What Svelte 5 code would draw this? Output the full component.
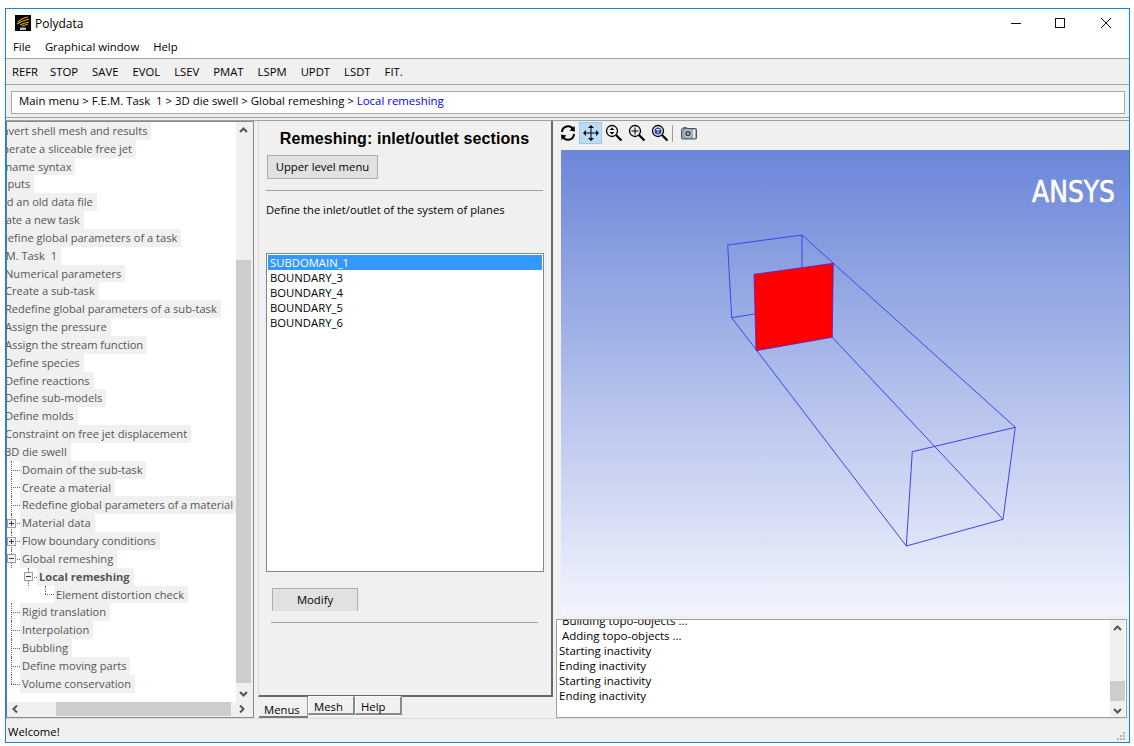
<script>
	const menus = ['File', 'Graphical window', 'Help'];
	const tools = ['REFR', 'STOP', 'SAVE', 'EVOL', 'LSEV', 'PMAT', 'LSPM', 'UPDT', 'LSDT', 'FIT.'];

	// depth, label, kind of twig in front of the label
	const tree = [
		[1, 'Convert shell mesh and results'],
		[1, 'Generate a sliceable free jet'],
		[1, 'Filename syntax'],
		[1, 'Outputs'],
		[1, 'Load an old data file'],
		[1, 'Create a new task'],
		[1, 'Redefine global parameters of a task'],
		[1, 'F.E.M. Task  1'],
		[2, 'Numerical parameters'],
		[2, 'Create a sub-task'],
		[2, 'Redefine global parameters of a sub-task'],
		[2, 'Assign the pressure'],
		[2, 'Assign the stream function'],
		[2, 'Define species'],
		[2, 'Define reactions'],
		[2, 'Define sub-models'],
		[2, 'Define molds'],
		[2, 'Constraint on free jet displacement'],
		[2, '3D die swell'],
		[3, 'Domain of the sub-task', 'leaf'],
		[3, 'Create a material', 'leaf'],
		[3, 'Redefine global parameters of a material', 'leaf'],
		[3, 'Material data', 'plus'],
		[3, 'Flow boundary conditions', 'plus'],
		[3, 'Global remeshing', 'minus'],
		[4, 'Local remeshing', 'minus'],
		[5, 'Element distortion check', 'end'],
		[3, 'Rigid translation', 'leaf'],
		[3, 'Interpolation', 'leaf'],
		[3, 'Bubbling', 'leaf'],
		[3, 'Define moving parts', 'leaf'],
		[3, 'Volume conservation', 'end']
	];

	const boundaries = ['SUBDOMAIN_1', 'BOUNDARY_3', 'BOUNDARY_4', 'BOUNDARY_5', 'BOUNDARY_6'];
	const log = [' Building topo-objects ...', ' Adding topo-objects ...', 'Starting inactivity', 'Ending inactivity', 'Starting inactivity', 'Ending inactivity'];
</script>

<div class="window">
	<header class="titlebar">
		<svg class="logo" viewBox="0 0 16 16" width="16" height="16">
			<rect width="16" height="16" fill="#000" />
			<path d="M3 7 Q7 3 13 2 M2 9 Q7 6 14 4 M5 10 Q9 8 14 7 M7 11 Q11 10 13 9" stroke="#e0a020" stroke-width="1.2" fill="none" />
			<rect x="5" y="12.5" width="6" height="2.5" fill="#bbb" />
		</svg>
		<span class="title">Polydata</span>
		<div class="caption">
			<svg width="44" height="12" viewBox="0 0 44 12"><path d="M1 6.5h10" stroke="#111" /></svg>
			<svg width="46" height="12" viewBox="0 0 46 12"><rect x="1.5" y="1.5" width="9" height="9" fill="none" stroke="#111" /></svg>
			<svg width="12" height="12" viewBox="0 0 12 12"><path d="M1 1l10 10M11 1L1 11" stroke="#111" /></svg>
		</div>
	</header>

	<nav class="menubar">
		{#each menus as m}<span>{m}</span>{/each}
	</nav>

	<div class="toolbar">
		{#each tools as t}<span>{t}</span>{/each}
	</div>

	<div class="crumbs">
		<div class="crumb-box">Main menu &gt; F.E.M. Task  1 &gt; 3D die swell &gt; Global remeshing &gt; <span class="current">Local remeshing</span></div>
	</div>

	<main class="body">
		<section class="tree-frame">
			<div class="tree-top">
				<div class="tree">
					{#each tree as [depth, label, twig]}
						<div class="row" style="padding-left: {(depth - 1) * 17 + 2}px">
							<span class="twig {twig ?? ''}">
								{#if twig === 'plus' || twig === 'minus'}
									<i class="box">{#if twig === 'plus'}<b></b>{/if}</i>
								{/if}
							</span>
							<span class="label" class:bold={depth === 4}>{label}</span>
						</div>
					{/each}
				</div>
				<div class="vscroll">
					<svg class="arrow" width="15" height="16" viewBox="0 0 15 16"><path d="M4 10l3.5-3.5L11 10" stroke="#555" stroke-width="2" fill="none" /></svg>
					<div class="vtrack"><div class="vthumb"></div></div>
					<svg class="arrow" width="15" height="16" viewBox="0 0 15 16"><path d="M4 6l3.5 3.5L11 6" stroke="#555" stroke-width="2" fill="none" /></svg>
				</div>
			</div>
			<div class="hscroll">
				<svg width="16" height="14" viewBox="0 0 16 14"><path d="M10 3.5L6.5 7l3.5 3.5" stroke="#555" stroke-width="2" fill="none" /></svg>
				<div class="htrack"><div class="hthumb"></div></div>
				<svg width="16" height="14" viewBox="0 0 16 14"><path d="M6 3.5L9.5 7 6 10.5" stroke="#555" stroke-width="2" fill="none" /></svg>
			</div>
		</section>

		<section class="middle">
			<div class="panel">
				<h1>Remeshing: inlet/outlet sections</h1>
				<button class="upper">Upper level menu</button>
				<hr class="rule-a" />
				<p>Define the inlet/outlet of the system of planes</p>
				<div class="listbox">
					{#each boundaries as b, i}
						<div class="item" class:selected={i === 0}>{b}</div>
					{/each}
				</div>
				<button class="modify">Modify</button>
				<hr class="rule-b" />
			</div>
			<div class="tabs">
				<span class="tab active">Menus</span>
				<span class="tab">Mesh</span>
				<span class="tab">Help</span>
			</div>
		</section>

		<section class="right">
			<div class="viewbar">
				<button class="ico" aria-label="Rotate">
					<svg width="18" height="18" viewBox="0 0 18 18"><path d="M3 8A6 6 0 0 1 14 5M15 10A6 6 0 0 1 4 13" fill="none" stroke="#000" stroke-width="2" /><path d="M10.500 6.500L16 7.500 15.500 2zM7.500 11.500L2 10.500 2.500 16z" fill="#000" /></svg>
				</button>
				<button class="ico on" aria-label="Pan">
					<svg width="18" height="18" viewBox="0 0 18 18"><path d="M9 3v12M3 9h12" stroke="#000" /><path d="M9 1l3 3H6zM9 17l-3-3h6zM1 9l3-3v6zM17 9l-3 3V6z" fill="#000" /></svg>
				</button>
				<button class="ico" aria-label="Zoom window">
					<svg width="18" height="18" viewBox="0 0 18 18"><circle cx="7" cy="7" r="5.500" fill="none" stroke="#000" stroke-width="1.300" /><path d="M11 11l5.500 5.500" stroke="#000" stroke-width="2.200" /><path d="M7 3.500L9.500 6h-5zM7 10.500L4.500 8h5z" fill="#000" /></svg>
				</button>
				<button class="ico" aria-label="Zoom in">
					<svg width="18" height="18" viewBox="0 0 18 18"><circle cx="7" cy="7" r="5.500" fill="none" stroke="#000" stroke-width="1.300" /><path d="M11 11l5.500 5.500" stroke="#000" stroke-width="2.200" /><path d="M7 3.500v7M3.500 7h7" stroke="#000" /></svg>
				</button>
				<button class="ico" aria-label="Zoom fit">
					<svg width="18" height="18" viewBox="0 0 18 18"><circle cx="7" cy="7" r="5.500" fill="none" stroke="#000" stroke-width="1.300" /><path d="M11 11l5.500 5.500" stroke="#000" stroke-width="2.200" /><circle cx="7" cy="7" r="3.500" fill="#1d4fb0" /><path d="M5 5.500h4M7 5.500v4" stroke="#dde" /></svg>
				</button>
				<span class="sep"></span>
				<button class="ico" aria-label="Snapshot">
					<svg width="16" height="14" viewBox="0 0 16 14"><rect x="0.500" y="2.500" width="15" height="10.500" rx="1" fill="#9aa4ae" stroke="#555" /><rect x="2" y="1" width="4" height="2" fill="#667" /><circle cx="7" cy="7.500" r="3.500" fill="#3d4a58" stroke="#dde" /><circle cx="7" cy="7.500" r="1.500" fill="#8ab" /><rect x="12" y="4" width="2" height="8" fill="#eef" /></svg>
				</button>
			</div>

			<div class="viewport">
				<svg width="568" height="465" viewBox="561 150 568 465">
					<g fill="none" stroke="#3a46ee" stroke-width="1">
						<path d="M727.700 245L802 235L801.900 267M727.700 245L731.700 317.700L754.500 314" />
						<path d="M802 235L1015.300 427.300L1003 519.300L906.300 546L912.300 451.700L1015.300 427.300" />
						<path d="M731.700 317.700L906.300 546M832.300 337.300L1003 519.300" />
					</g>
					<path d="M754 274.300L833.300 263.300L832.300 337.300L756 350.700z" fill="#ff0000" stroke="#3a1ff0" stroke-width="0.700" />
					<text x="1032" y="202" class="brand" textLength="83" lengthAdjust="spacingAndGlyphs">ANSYS</text>
				</svg>
			</div>

			<div class="log">
				<div class="log-lines">
					{#each log as line}<div>{line}</div>{/each}
				</div>
				<div class="log-scroll">
					<svg class="arrow" width="15" height="16" viewBox="0 0 15 16"><path d="M4 10l3.500-3.500L11 10" stroke="#555" stroke-width="2" fill="none" /></svg>
					<div class="log-track"><div class="log-thumb"></div></div>
					<svg class="arrow" width="15" height="16" viewBox="0 0 15 16"><path d="M4 6l3.500 3.500L11 6" stroke="#555" stroke-width="2" fill="none" /></svg>
				</div>
			</div>
		</section>
	</main>

	<footer class="status">
		<span>Welcome!</span>
		<svg width="10" height="10" viewBox="0 0 10 10" class="grip"><path d="M7 1h2v2H7zM4 4h2v2H4zM7 4h2v2H7zM1 7h2v2H1zM4 7h2v2H4zM7 7h2v2H7z" fill="#b5b5b5" /></svg>
	</footer>
</div>

<style>
	:global(body) {
		margin: 0;
		background: #fff;
	}

	.window {
		box-sizing: border-box;
		margin: 8px 0 0 5px;
		width: 1125px;
		height: 735px;
		border: 1px solid #1883d7;
		background: #f0f0f0;
		display: flex;
		flex-direction: column;
		font: 11.3px "Open Sans", "Noto Sans", sans-serif;
		color: #000;
		overflow: hidden;
	}

	.titlebar {
		height: 28px;
		flex: none;
		background: #fff;
		display: flex;
		align-items: center;
		padding-left: 9px;
	}

	.title {
		margin-left: 4px;
		font-size: 12px;
	}

	.caption {
		margin-left: auto;
		margin-right: 17px;
		display: flex;
		align-items: center;
	}

	.menubar {
		box-sizing: content-box;
		height: 19px;
		padding: 0 0 2px 7px;
		flex: none;
		background: #fff;
		display: flex;
		gap: 14px;
		align-items: center;
		border-bottom: 1px solid #a0a0a0;
	}

	.toolbar {
		height: 25px;
		flex: none;
		display: flex;
		gap: 14px;
		padding-left: 6px;
		align-items: center;
		border-bottom: 1px solid #a0a0a0;
	}

	.toolbar span:first-child {
		margin-right: -2px;
	}

	.crumbs {
		height: 33px;
		flex: none;
		box-sizing: border-box;
		padding: 6px 4px 0 5px;
		border-bottom: 1px solid #a0a0a0;
	}

	.crumb-box {
		box-sizing: border-box;
		height: 23px;
		background: #fff;
		border: 1px solid #a8a8a8;
		padding-left: 7px;
		font-size: 11.4px;
		line-height: 18px;
		white-space: pre;
	}

	.current {
		color: #0000ee;
	}

	.body {
		flex: 1;
		min-height: 0;
		display: flex;
		border-top: 1px solid #a0a0a0;
		margin-top: 2px;
		border-bottom: 1px solid #dcdcdc;
	}

	/* left tree */
	.tree-frame {
		box-sizing: border-box;
		width: 248px;
		flex: none;
		background: #f0f0f0;
		border: 1px solid #8a8a8a;
		border-left: 1px solid #4f7fa8;
		display: flex;
		flex-direction: column;
	}

	.tree-top {
		flex: 1;
		min-height: 0;
		display: flex;
	}

	.tree {
		flex: 1;
		min-width: 0;
		background: #fff;
		overflow: hidden;
	}

	.row {
		display: flex;
		height: 17.84px;
		margin-left: -40px;
		white-space: pre;
		font-size: 11.1px;
		line-height: 17px;
		color: #555;
	}

	.label {
		padding: 0 4px 0 2px;
		background: #f0f0f0;
	}

	.bold {
		font-weight: 700;
	}

	.twig {
		position: relative;
		width: 17px;
		flex: none;
	}

	.leaf::before,
	.plus::before,
	.minus::before,
	.end::before {
		content: '';
		position: absolute;
		left: 8px;
		top: 0;
		bottom: 0;
		border-left: 1px dotted #666;
	}

	.end::before {
		bottom: 50%;
	}

	.leaf::after,
	.plus::after,
	.minus::after,
	.end::after {
		content: '';
		position: absolute;
		left: 8px;
		right: 0;
		top: 50%;
		border-top: 1px dotted #666;
	}

	.box {
		position: absolute;
		z-index: 1;
		left: 4px;
		top: 4.500px;
		box-sizing: border-box;
		width: 9px;
		height: 9px;
		border: 1px solid #a0a0a0;
		background: #f4f4f4;
	}

	.box::before {
		content: '';
		position: absolute;
		left: 1px;
		right: 1px;
		top: 3px;
		height: 1px;
		background: #2a3a6a;
	}

	.box b {
		position: absolute;
		top: 1px;
		bottom: 1px;
		left: 3px;
		width: 1px;
		background: #2a3a6a;
	}

	.vscroll,
	.log-scroll {
		width: 15px;
		flex: none;
		margin-right: 2px;
		display: flex;
		flex-direction: column;
		background: #f0f0f0;
	}

	.arrow {
		flex: none;
	}

	.vtrack {
		flex: 1;
		padding-top: 122px;
		padding-bottom: 3px;
		display: flex;
	}

	.vthumb {
		flex: 1;
		background: #cdcdcd;
	}

	.hscroll {
		height: 14px;
		flex: none;
		margin: 0 3px 1px 0;
		display: flex;
		background: #f0f0f0;
	}

	.htrack {
		flex: 1;
		padding-left: 33px;
		padding-right: 3px;
		display: flex;
	}

	.hthumb {
		flex: 1;
		background: #cdcdcd;
	}

	/* middle panel */
	.middle {
		box-sizing: border-box;
		width: 295px;
		margin-left: 4px;
		flex: none;
		display: flex;
		flex-direction: column;
	}

	.panel {
		box-sizing: border-box;
		height: 576px;
		border-right: 2px solid #6a6a6a;
		border-bottom: 2px solid #6a6a6a;
		border-left: 1px solid #d8d8d8;
		display: flex;
		flex-direction: column;
		padding: 0 8px 0 7px;
	}

	h1 {
		margin: 8px 0 0;
		font: 700 16px/19px "Liberation Sans", Arial, sans-serif;
		letter-spacing: 0.1px;
		text-align: center;
	}

	button {
		font: inherit;
		color: inherit;
		padding: 0;
	}

	.upper {
		width: 111px;
		height: 24px;
		margin: 7px 0 0 1px;
		padding-bottom: 2px;
		background: #e1e1e1;
		border: 1px solid #adadad;
	}

	hr {
		border: none;
		height: 1px;
		background: #a0a0a0;
		margin: 0;
	}

	.rule-a {
		margin-top: 11px;
	}

	p {
		margin: 11px 0 0;
		line-height: 16px;
		font-size: 11.2px;
	}

	.listbox {
		box-sizing: border-box;
		margin-top: 35px;
		height: 319px;
		width: 278px;
		background: #fff;
		border: 1px solid #828790;
		padding: 1px;
	}

	.item {
		height: 15px;
		line-height: 15px;
		padding-left: 2px;
	}

	.selected {
		background: #3399ff;
		color: #fff;
	}

	.modify {
		width: 86px;
		height: 23px;
		margin: 16px 0 0 6px;
		padding-bottom: 2px;
		background: #e1e1e1;
		border: 1px solid #adadad;
		border-bottom: none;
	}

	.rule-b {
		margin: 11px 5px 0 5px;
	}

	.tabs {
		display: flex;
		padding-left: 1px;
		align-items: flex-start;
	}

	.tab {
		box-sizing: border-box;
		height: 19px;
		padding: 0 0 0 5px;
		width: 47px;
		line-height: 19px;
		background: #f0f0f0;
		border: 1px solid #8a8a8a;
		border-top-color: #f8f8f8;
		border-left-color: #fff;
		border-bottom-width: 2px;
		border-right-width: 2px;
		margin-top: -1px;
	}

	.active {
		width: 49px;
		height: 21px;
		margin-top: 0;
		line-height: 25px;
		border: none;
		border-bottom: 2px solid #777;
		border-right: 1px solid #999;
	}

	/* right side */
	.right {
		flex: 1;
		min-width: 0;
		margin-left: 3px;
		display: flex;
		flex-direction: column;
	}

	.viewbar {
		height: 29px;
		flex: none;
		box-sizing: border-box;
		padding: 1px 0 0 0;
		display: flex;
		align-items: flex-start;
	}

	.ico {
		width: 23px;
		height: 22px;
		border: 1px solid transparent;
		background: none;
		display: flex;
		align-items: center;
		justify-content: center;
	}

	.on {
		background: #bcdcf4;
		border-color: #99c9ef;
	}

	.sep {
		width: 1px;
		height: 17px;
		margin: 3px 4px 0 1px;
		background: #9a9a9a;
	}

	.viewport {
		margin-left: 5px;
		height: 465px;
		flex: none;
		background: linear-gradient(#6c86d8, #f3f5fd);
	}

	.viewport svg {
		display: block;
	}

	.brand {
		font: 400 30px "DejaVu Sans", sans-serif;
		fill: #fff;
		stroke: #fff;
		stroke-width: 0.6px;
	}

	.log {
		box-sizing: border-box;
		margin: 4px 2px 0 0;
		flex: 1;
		min-height: 0;
		background: #fff;
		border: 1px solid #a0a0a0;
		display: flex;
	}

	.log-lines {
		flex: 1;
		overflow: hidden;
		padding-left: 2px;
		font-size: 11.5px;
		line-height: 15px;
		white-space: pre;
	}

	.log-lines div:first-child {
		margin-top: -7px;
	}

	.log-scroll {
		margin-right: 1px;
	}

	.log-track {
		flex: 1;
		padding-top: 45px;
		padding-bottom: 2px;
		display: flex;
		flex-direction: column;
		justify-content: flex-end;
	}

	.log-thumb {
		height: 20px;
		background: #cdcdcd;
	}

	.status {
		height: 23px;
		flex: none;
		display: flex;
		justify-content: space-between;
		align-items: center;
		padding: 1px 3px 0 2px;
		box-sizing: border-box;
	}

	.grip {
		align-self: flex-end;
		margin-bottom: 1px;
	}
</style>
